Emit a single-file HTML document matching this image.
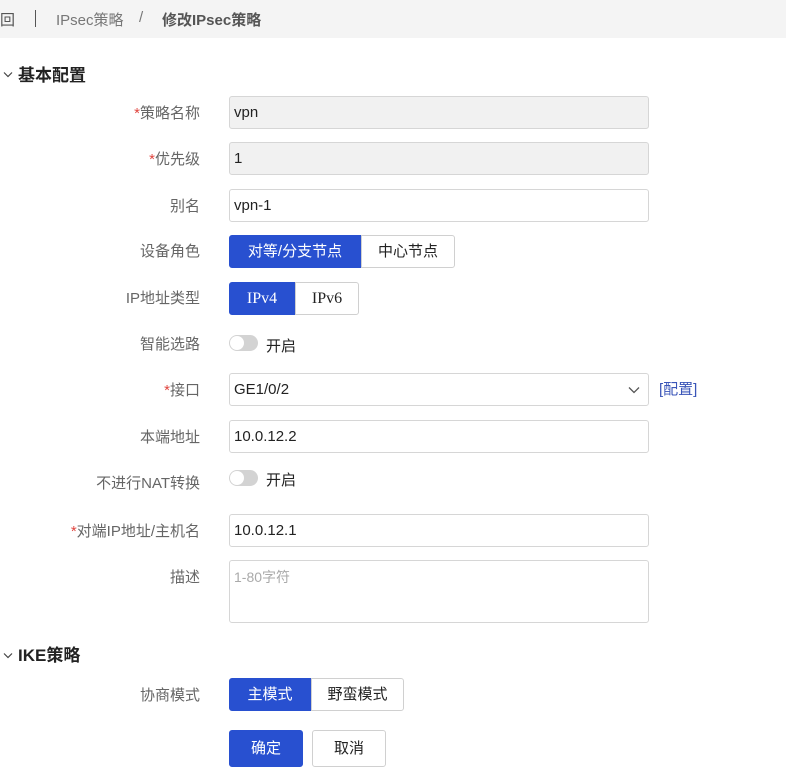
<!DOCTYPE html>
<html><head><meta charset="utf-8"><style>
*{box-sizing:border-box;margin:0;padding:0}
body{width:786px;height:777px;overflow:hidden;background:#fff;position:relative;font-family:"Liberation Sans","Noto Sans CJK SC",sans-serif;font-size:14px;color:#333}
.a{position:absolute}
.hdr{left:0;top:0;width:786px;height:38px;background:#f4f4f4}
.lbl{position:absolute;right:586px;width:220px;text-align:right;color:#666;font-size:15px;line-height:20px;margin-top:2px}
.st{color:#e0443e}
.in{position:absolute;left:229px;width:420px;height:33px;border:1px solid #d6d6d6;border-radius:3px;padding-left:4px;line-height:31px;font-size:15px;color:#222;background:#fff}
.dis{background:#f1f1f1}
.bt{position:absolute;height:33px;line-height:31px;text-align:center;font-size:15px;border:1px solid #d0d0d0;color:#222;background:#fff}
.on{background:#2850d0;color:#fff;border-color:#2850d0}
.sec{position:absolute;left:18px;font-weight:bold;font-size:17px;color:#222}
.chev{position:absolute;left:3px}
.tg{position:absolute;left:229px;width:29px;height:16px;border-radius:8px;background:#d3d3d3}
.tg:after{content:"";position:absolute;left:1px;top:1px;width:14px;height:14px;border-radius:50%;background:#fff}
.tt{position:absolute;left:266px;font-size:15px;color:#222}
</style></head><body>
<div class="a hdr"></div>
<div class="a" style="left:0;top:9px;font-size:15px;color:#555">回</div>
<div class="a" style="left:35px;top:10px;width:1px;height:17px;background:#555"></div>
<div class="a" style="left:56px;top:9px;font-size:15px;color:#777">IPsec策略</div>
<div class="a" style="left:139px;top:9px;font-size:15px;color:#777">/</div>
<div class="a" style="left:162px;top:9px;font-size:15px;color:#555;font-weight:bold">修改IPsec策略</div>

<svg class="chev" style="top:71px" width="10" height="7" viewBox="0 0 10 7"><path d="M1 1.5l4 4 4-4" fill="none" stroke="#444" stroke-width="1.2"/></svg>
<div class="sec" style="top:61px">基本配置</div>

<div class="lbl" style="top:102px"><span class="st">*</span>策略名称</div>
<div class="in dis" style="top:96px">vpn</div>
<div class="lbl" style="top:148px"><span class="st">*</span>优先级</div>
<div class="in dis" style="top:142px">1</div>
<div class="lbl" style="top:195px">别名</div>
<div class="in" style="top:189px">vpn-1</div>
<div class="lbl" style="top:240px">设备角色</div>
<div class="bt on" style="left:229px;top:235px;width:132px;border-radius:3px 0 0 3px">对等/分支节点</div>
<div class="bt" style="left:361px;top:235px;width:94px;border-radius:0 3px 3px 0">中心节点</div>
<div class="lbl" style="top:287px">IP地址类型</div>
<div class="bt on" style="left:229px;top:282px;width:66px;border-radius:3px 0 0 3px;font-family:'Liberation Serif','Noto Serif CJK SC',serif;font-size:16px">IPv4</div>
<div class="bt" style="left:295px;top:282px;width:64px;border-radius:0 3px 3px 0;font-family:'Liberation Serif','Noto Serif CJK SC',serif;font-size:16px">IPv6</div>
<div class="lbl" style="top:333px">智能选路</div>
<div class="tg" style="top:335px"></div><div class="tt" style="top:335px">开启</div>
<div class="lbl" style="top:379px"><span class="st">*</span>接口</div>
<div class="in" style="top:373px">GE1/0/2<svg style="position:absolute;right:8px;top:12px" width="12" height="8" viewBox="0 0 12 8"><path d="M1 1.5l5 5 5-5" fill="none" stroke="#555" stroke-width="1.3"/></svg></div>
<div class="a" style="left:659px;top:378px;color:#3a55b8;font-size:15px">[配置]</div>
<div class="lbl" style="top:426px">本端地址</div>
<div class="in" style="top:420px">10.0.12.2</div>
<div class="lbl" style="top:472px">不进行NAT转换</div>
<div class="tg" style="top:470px"></div><div class="tt" style="top:469px">开启</div>
<div class="lbl" style="top:520px"><span class="st">*</span>对端IP地址/主机名</div>
<div class="in" style="top:514px">10.0.12.1</div>
<div class="lbl" style="top:566px">描述</div>
<div class="in" style="top:560px;height:63px;line-height:32px;color:#aaa;font-size:14px">1-80字符</div>

<svg class="chev" style="top:652px" width="10" height="7" viewBox="0 0 10 7"><path d="M1 1.5l4 4 4-4" fill="none" stroke="#444" stroke-width="1.2"/></svg>
<div class="sec" style="top:641px">IKE策略</div>
<div class="lbl" style="top:684px">协商模式</div>
<div class="bt on" style="left:229px;top:678px;width:82px;border-radius:3px 0 0 3px">主模式</div>
<div class="bt" style="left:311px;top:678px;width:93px;border-radius:0 3px 3px 0">野蛮模式</div>
<div class="bt on" style="left:229px;top:730px;width:74px;height:37px;line-height:35px;border-radius:3px">确定</div>
<div class="bt" style="left:312px;top:730px;width:74px;height:37px;line-height:35px;border-radius:3px">取消</div>
</body></html>
